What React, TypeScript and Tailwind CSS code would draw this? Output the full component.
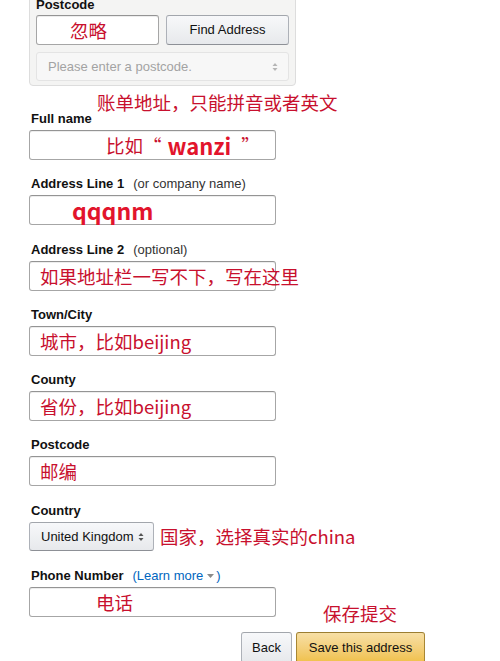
import React from "react";

const cn = "font-['Noto_Sans_CJK_SC','Noto_Sans',sans-serif]";
const red = `text-[#c8102e] ${cn}`;
const label = "text-[13px] font-bold leading-[17px] text-[#111] h-[17px] whitespace-nowrap";
const inputBox =
  "h-[30px] w-[247px] rounded-[3px] border border-[#a6a6a6] border-t-[#949494] bg-white shadow-[inset_0_1px_0_rgba(0,0,0,0.07)] flex items-center whitespace-nowrap mt-[3px]";
const grayBase =
  "rounded-[3px] border border-[#adb1b8] border-t-[#a2a6ac] border-b-[#8d9096] bg-linear-to-b from-[#f7f8fa] to-[#e7e9ec] text-[13px] text-[#111] flex items-center";

function Updown({ color = "#555" }: { color?: string }) {
  return (
    <svg width="6" height="10" viewBox="0 0 6 10">
      <path d="M3 1 L5.5 4 L0.5 4 Z" fill={color} />
      <path d="M3 9 L5.5 6 L0.5 6 Z" fill={color} />
    </svg>
  );
}

function Row({
  name,
  extra,
  mb,
  children,
}: {
  name: string;
  extra?: React.ReactNode;
  mb: string;
  children: React.ReactNode;
}) {
  return (
    <div className={mb}>
      <div className={`${label} pl-[2px]`}>
        {name}
        {extra}
      </div>
      {children}
    </div>
  );
}

export default function App() {
  return (
    <div className="relative w-[500px] h-[661px] overflow-hidden bg-white font-['Liberation_Sans',Arial,sans-serif] text-[#111]">
      {/* top postcode panel */}
      <div className="ml-[29px] mt-[-8px] w-[267px] rounded-[4px] border border-[#dddddd] bg-[#f4f4f3] pl-[6px] pr-[6px] pt-[3px] pb-[4px]">
        <div className={label}>Postcode</div>
        <div className="mt-[2px] flex gap-[7px]">
          <div className="h-[30px] w-[123px] rounded-[3px] border border-[#a6a6a6] border-t-[#949494] bg-white shadow-[inset_0_1px_0_rgba(0,0,0,0.07)] flex items-center pl-[33px]">
            <span className={`${red} text-[18.5px] leading-none`}>忽略</span>
          </div>
          <div className={`${grayBase} justify-center h-[30px] w-[123px]`}>Find Address</div>
        </div>
        <div className="mt-[7px] h-[29px] w-[253px] rounded-[3px] border border-[#e4e4e4] bg-[#f7f7f7] flex items-center justify-between pl-[11px] pr-[10px] text-[13px] text-[#a3a3a3]">
          <span>Please enter a postcode.</span>
          <Updown color="#b5b5b5" />
        </div>
      </div>

      {/* form */}
      <div className="ml-[29px] mt-[24px]">
        <Row name="Full name" mb="mb-[15px]">
          <div className={`${inputBox} pl-[76px]`}>
            <span className={`${red} text-[18.5px] leading-none`}>比如“ </span>
            <span className={`text-[#e2142c] ${cn} text-[22px] font-bold leading-none ml-[6px]`}>wanzi</span>
            <span className={`${red} text-[18.5px] leading-none ml-[10px]`}>”</span>
          </div>
        </Row>
        <Row
          name="Address Line 1"
          extra={<span className="ml-[9px] font-normal text-[#333]">(or company name)</span>}
          mb="mb-[16px]"
        >
          <div className={`${inputBox} pl-[42px]`}>
            <span className={`text-[#e2142c] ${cn} text-[23px] font-bold leading-none`}>qqqnm</span>
          </div>
        </Row>
        <Row
          name="Address Line 2"
          extra={<span className="ml-[9px] font-normal text-[#333]">(optional)</span>}
          mb="mb-[15px]"
        >
          <div className={`${inputBox} pl-[10px]`}>
            <span className={`${red} text-[18.5px] leading-none`}>如果地址栏一写不下，写在这里</span>
          </div>
        </Row>
        <Row name="Town/City" mb="mb-[15px]">
          <div className={`${inputBox} pl-[10px]`}>
            <span className={`${red} text-[18.5px] leading-none`}>城市，比如beijing</span>
          </div>
        </Row>
        <Row name="County" mb="mb-[15px]">
          <div className={`${inputBox} pl-[10px]`}>
            <span className={`${red} text-[18.5px] leading-none`}>省份，比如beijing</span>
          </div>
        </Row>
        <Row name="Postcode" mb="mb-[16px]">
          <div className={`${inputBox} pl-[10px]`}>
            <span className={`${red} text-[18.5px] leading-none`}>邮编</span>
          </div>
        </Row>
        <Row name="Country" mb="mb-[16px]">
          <div className="mt-[3px] flex items-center gap-[6px]">
            <div className={`${grayBase} justify-between h-[29px] w-[125px] pl-[11px] pr-[9px]`}>
              <span className="text-[13px]">United Kingdom</span>
              <Updown color="#555" />
            </div>
            <span className={`${red} text-[18.5px] leading-none whitespace-nowrap`}>国家，选择真实的china</span>
          </div>
        </Row>
        <Row
          name="Phone Number"
          extra={
            <span className="ml-[9px] font-normal text-[#0066c0] inline-flex items-center">
              (Learn more
              <svg width="7" height="4" viewBox="0 0 7 4" className="ml-[4px] mr-[2px]">
                <path d="M0 0 L7 0 L3.5 4 Z" fill="#8a8a8a" />
              </svg>
              )
            </span>
          }
          mb="mb-[15px]"
        >
          <div className={`${inputBox} pl-[66px]`}>
            <span className={`${red} text-[18.5px] leading-none`}>电话</span>
          </div>
        </Row>
        <div className="flex gap-[4px] ml-[212px]">
          <div className={`${grayBase} justify-center h-[31px] w-[51px]`}>Back</div>
          <div className="h-[31px] w-[129px] rounded-[3px] border border-[#a88734] border-t-[#9c7e31] border-b-[#846a29] bg-linear-to-b from-[#f7dfa5] to-[#f0c14b] text-[13px] text-[#111] flex items-center justify-center">
            Save this address
          </div>
        </div>
      </div>

      {/* overlay annotations */}
      <div className={`absolute left-[97px] top-[93px] ${red} text-[18.5px] leading-none whitespace-nowrap`}>
        账单地址，只能拼音或者英文
      </div>
      <div className={`absolute left-[323px] top-[604px] ${red} text-[18.5px] leading-none whitespace-nowrap`}>
        保存提交
      </div>
    </div>
  );
}
